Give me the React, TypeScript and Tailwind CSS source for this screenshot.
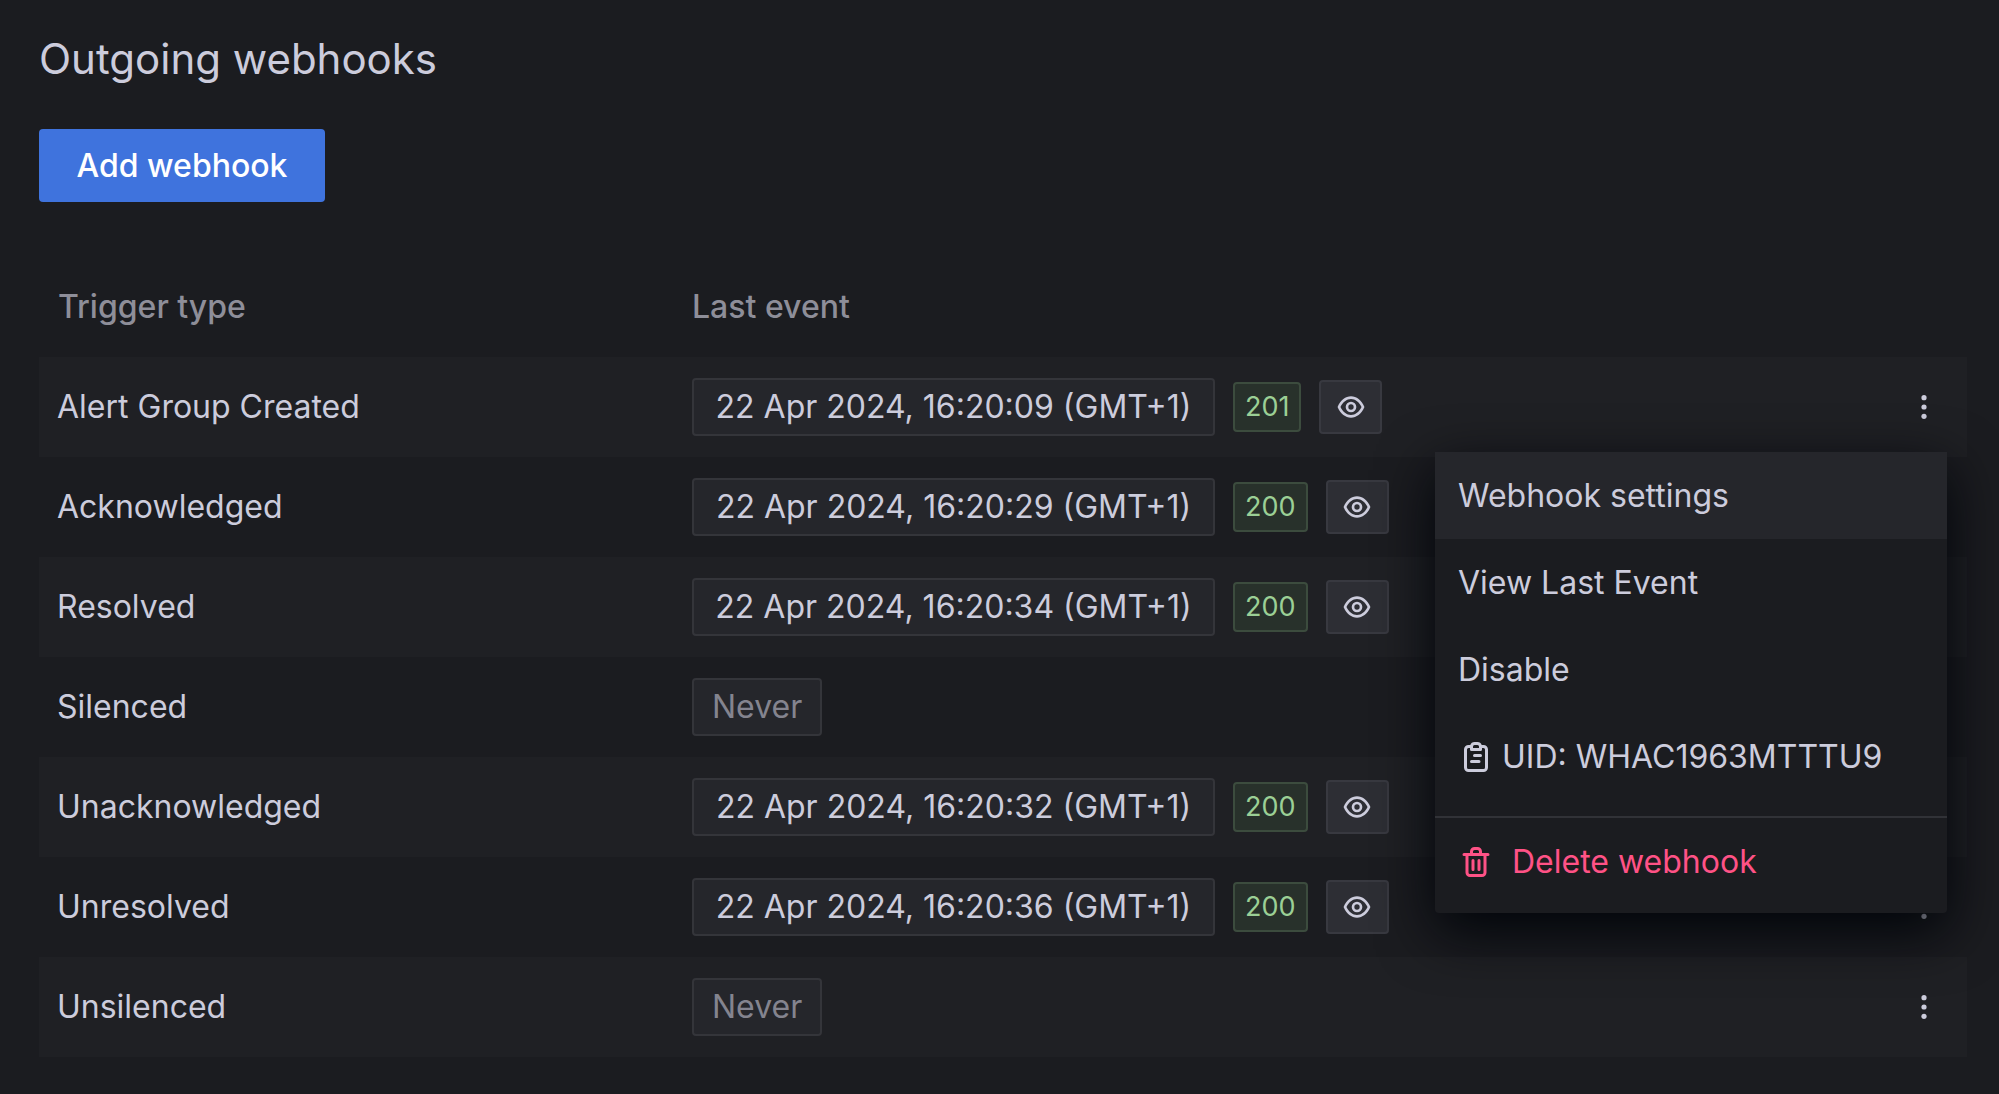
import React from "react";

type Row = { name: string; time?: string; code?: string };

const rows: Row[] = [
  { name: "Alert Group Created", time: "22 Apr 2024, 16:20:09 (GMT+1)", code: "201" },
  { name: "Acknowledged", time: "22 Apr 2024, 16:20:29 (GMT+1)", code: "200" },
  { name: "Resolved", time: "22 Apr 2024, 16:20:34 (GMT+1)", code: "200" },
  { name: "Silenced" },
  { name: "Unacknowledged", time: "22 Apr 2024, 16:20:32 (GMT+1)", code: "200" },
  { name: "Unresolved", time: "22 Apr 2024, 16:20:36 (GMT+1)", code: "200" },
  { name: "Unsilenced" },
];

function EyeIcon() {
  return (
    <svg className="size-8" viewBox="0 0 24 24" fill="currentColor" aria-hidden="true">
      <path d="M21.92,11.6C19.9,6.91,16.1,4,12,4S4.1,6.91,2.08,11.6a1,1,0,0,0,0,.8C4.1,17.09,7.9,20,12,20s7.9-2.91,9.92-7.6A1,1,0,0,0,21.92,11.6ZM12,18c-3.17,0-6.17-2.29-7.9-6C5.83,8.29,8.83,6,12,6s6.17,2.29,7.9,6C18.17,15.71,15.17,18,12,18ZM12,8a4,4,0,1,0,4,4A4,4,0,0,0,12,8Zm0,6a2,2,0,1,1,2-2A2,2,0,0,1,12,14Z" />
    </svg>
  );
}

function DotsIcon() {
  return (
    <svg className="h-6 w-2" viewBox="0 0 8 24" fill="currentColor" aria-hidden="true">
      <circle cx="4" cy="2.7" r="2.6" />
      <circle cx="4" cy="12" r="2.6" />
      <circle cx="4" cy="21.3" r="2.6" />
    </svg>
  );
}

function ClipboardIcon() {
  return (
    <svg className="size-9 shrink-0" viewBox="0 0 24 24" fill="currentColor" aria-hidden="true">
      <path d="M14,14H9a1,1,0,0,0,0,2h5a1,1,0,0,0,0-2ZM17,4H15.82A3,3,0,0,0,13,2H11A3,3,0,0,0,8.18,4H7A3,3,0,0,0,4,7V19a3,3,0,0,0,3,3H17a3,3,0,0,0,3-3V7A3,3,0,0,0,17,4ZM10,5a1,1,0,0,1,1-1h2a1,1,0,0,1,1,1V6H10Zm8,14a1,1,0,0,1-1,1H7a1,1,0,0,1-1-1V7A1,1,0,0,1,7,6H8V7A1,1,0,0,0,9,8h6a1,1,0,0,0,1-1V6h1a1,1,0,0,1,1,1Zm-3-9H11a1,1,0,0,0,0,2h4a1,1,0,0,0,0-2Z" />
    </svg>
  );
}

function TrashIcon() {
  return (
    <svg className="size-9 shrink-0" viewBox="0 0 24 24" fill="currentColor" aria-hidden="true">
      <path d="M10,18a1,1,0,0,0,1-1V11a1,1,0,0,0-2,0v6A1,1,0,0,0,10,18ZM20,6H16V5a3,3,0,0,0-3-3H11A3,3,0,0,0,8,5V6H4A1,1,0,0,0,4,8H5V19a3,3,0,0,0,3,3h8a3,3,0,0,0,3-3V8h1a1,1,0,0,0,0-2ZM10,5a1,1,0,0,1,1-1h2a1,1,0,0,1,1,1V6H10Zm7,14a1,1,0,0,1-1,1H8a1,1,0,0,1-1-1V8H17Zm-3-1a1,1,0,0,0,1-1V11a1,1,0,0,0-2,0v6A1,1,0,0,0,14,18Z" />
    </svg>
  );
}

const itemClass = "flex h-[87px] w-full items-center px-[23px] text-left";

function WebhookMenu() {
  return (
    <div
      role="menu"
      className="absolute top-[195px] right-5 z-10 w-[512px] rounded-b bg-[#1b1c20] pb-2 shadow-[0_18px_56px_0_#010409]"
    >
      <button role="menuitem" className={`${itemClass} bg-[#25262b]`}>Webhook settings</button>
      <button role="menuitem" className={itemClass}>View Last Event</button>
      <button role="menuitem" className={itemClass}>Disable</button>
      <button role="menuitem" className={`${itemClass} gap-2`}>
        <ClipboardIcon />
        UID: WHAC1963MTTTU9
      </button>
      <hr className="mt-4 border-t-2 border-[#313237]" />
      <button role="menuitem" className={`${itemClass} gap-[18px] text-[#ff5286]`}>
        <TrashIcon />
        Delete webhook
      </button>
    </div>
  );
}

export default function App() {
  return (
    <main className="min-h-screen bg-[#1b1c20] pt-8 pr-8 pb-9 pl-[39px] font-[Inter,sans-serif] text-[32px] leading-10 text-[#ccccdc] [font-optical-sizing:none]">
      <h1 className="text-[42px] leading-[54px]">Outgoing webhooks</h1>
      <button className="mt-[43px] flex h-[73px] min-w-[286px] items-center justify-center rounded bg-[#3f73dd] px-9 font-medium text-white">
        Add webhook
      </button>
      <div className="relative mt-[55px]">
        <table className="w-full table-fixed border-collapse text-left">
          <colgroup>
            <col className="w-[634px]" />
            <col />
            <col className="w-[86px]" />
          </colgroup>
          <thead>
            <tr className="h-[100px] text-[#8e8e99]">
              <th className="pl-[19px] font-medium">Trigger type</th>
              <th className="pl-[19px] font-medium">Last event</th>
              <th aria-label="Actions" />
            </tr>
          </thead>
          <tbody>
            {rows.map((row) => (
              <tr key={row.name} className="h-[100px] odd:bg-[#1f2024]">
                <td className="pl-[18px]">{row.name}</td>
                <td className="pl-[19px]">
                  <div className="flex items-center gap-[18px]">
                    <span
                      className={`flex h-[58px] items-center justify-center rounded border-2 border-[#34353a] bg-[#25262b] px-[18px] ${row.time ? "min-w-[523px]" : "text-[#84848f]"}`}
                    >
                      {row.time ?? "Never"}
                    </span>
                    {row.code && (
                      <>
                        <span className="flex h-[50px] items-center rounded border-2 border-[#3c4c3e] bg-[#28312b] px-[10px] text-[27px] text-[#9bcf95]">
                          {row.code}
                        </span>
                        <button
                          aria-label={`View last event of ${row.name}`}
                          className="flex h-[54px] w-[63px] items-center justify-center rounded border-2 border-[#383940] bg-[#2d2e34]"
                        >
                          <EyeIcon />
                        </button>
                      </>
                    )}
                  </div>
                </td>
                <td>
                  <button aria-label={`Actions for ${row.name}`} className="mx-auto flex size-10 items-center justify-center">
                    <DotsIcon />
                  </button>
                </td>
              </tr>
            ))}
          </tbody>
        </table>
        <WebhookMenu />
      </div>
    </main>
  );
}
